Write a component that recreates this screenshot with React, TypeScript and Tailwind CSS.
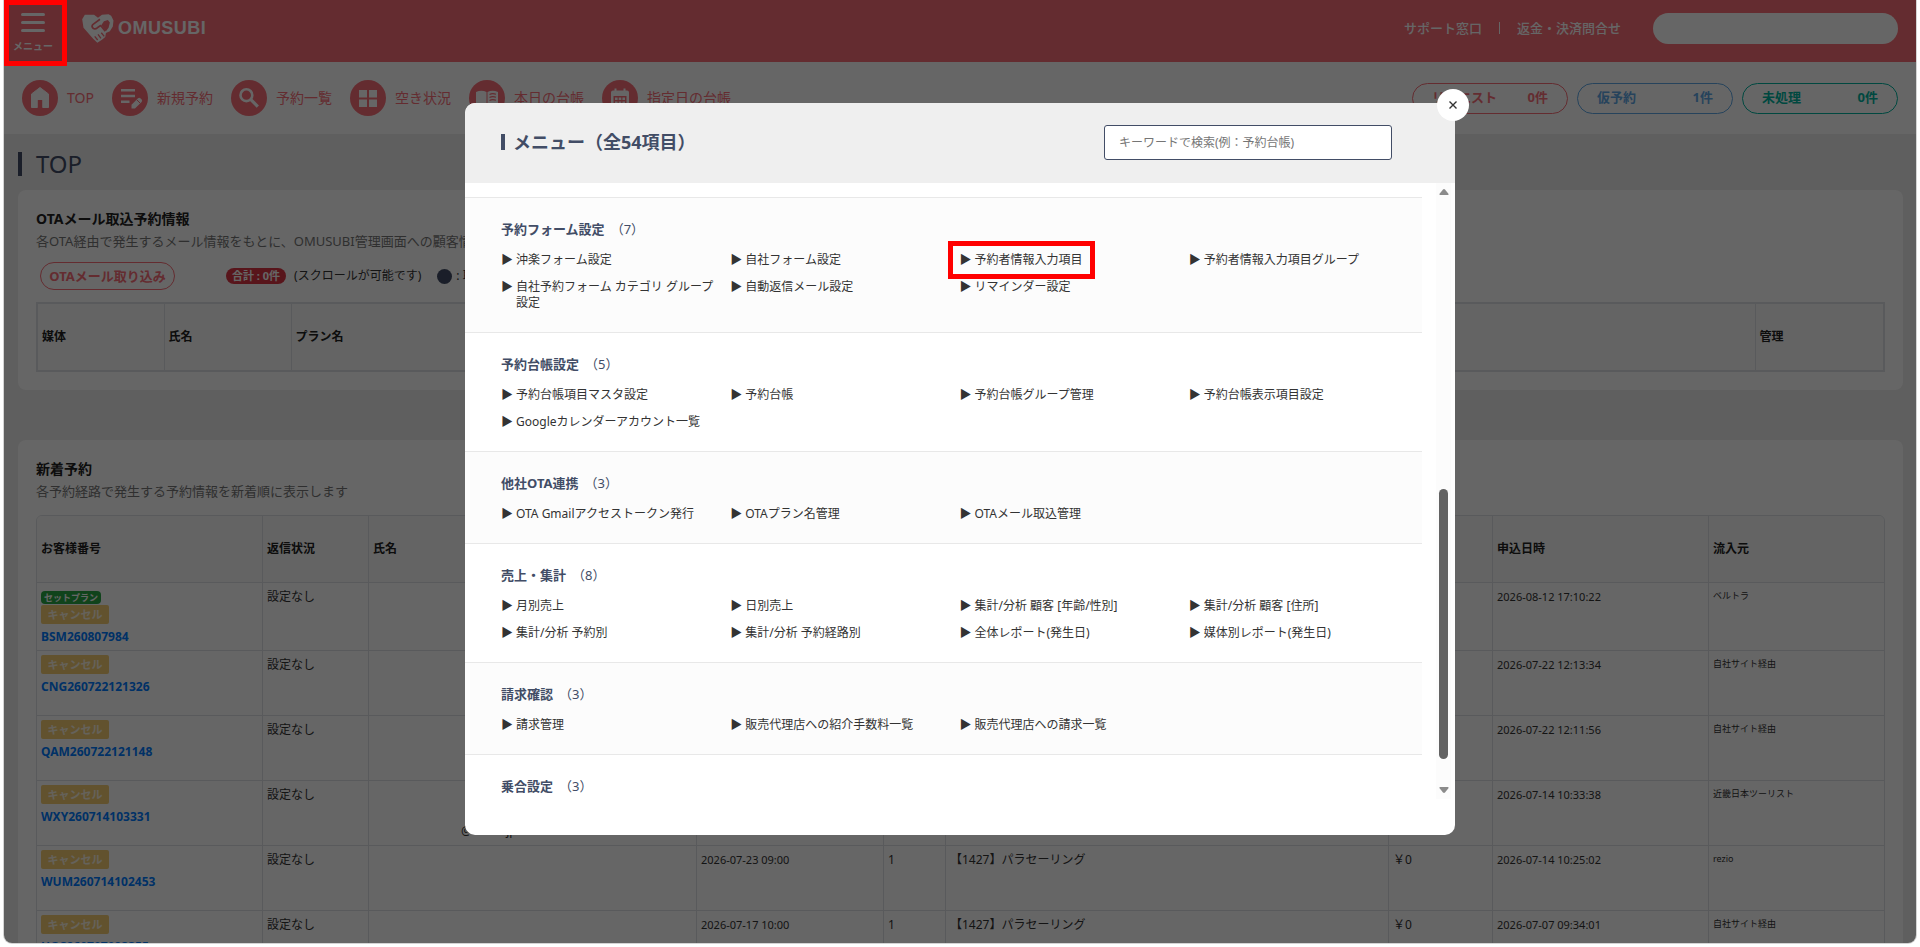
import React, { useState } from 'react';

type MenuSection = {
  title: string;
  count: number;
  items: string[];
};

type Reservation = {
  id: string;
  setPlan?: boolean;
  contact?: string;
  useDate?: string;
  people?: string;
  plan?: string;
  price?: string;
  appliedAt: string;
  source: string;
};

const menuSections: MenuSection[] = [
  {
    title: '予約フォーム設定',
    count: 7,
    items: [
      '沖楽フォーム設定',
      '自社フォーム設定',
      '予約者情報入力項目',
      '予約者情報入力項目グループ',
      '自社予約フォーム カテゴリ グループ設定',
      '自動返信メール設定',
      'リマインダー設定',
    ],
  },
  {
    title: '予約台帳設定',
    count: 5,
    items: [
      '予約台帳項目マスタ設定',
      '予約台帳',
      '予約台帳グループ管理',
      '予約台帳表示項目設定',
      'Googleカレンダーアカウント一覧',
    ],
  },
  {
    title: '他社OTA連携',
    count: 3,
    items: ['OTA Gmailアクセストークン発行', 'OTAプラン名管理', 'OTAメール取込管理'],
  },
  {
    title: '売上・集計',
    count: 8,
    items: [
      '月別売上',
      '日別売上',
      '集計/分析 顧客 [年齢/性別]',
      '集計/分析 顧客 [住所]',
      '集計/分析 予約別',
      '集計/分析 予約経路別',
      '全体レポート(発生日)',
      '媒体別レポート(発生日)',
    ],
  },
  {
    title: '請求確認',
    count: 3,
    items: ['請求管理', '販売代理店への紹介手数料一覧', '販売代理店への請求一覧'],
  },
  { title: '乗合設定', count: 3, items: [] },
];

const reservations: Reservation[] = [
  { id: 'BSM260807984', setPlan: true, appliedAt: '2026-08-12 17:10:22', source: 'ベルトラ' },
  { id: 'CNG260722121326', appliedAt: '2026-07-22 12:13:34', source: '自社サイト経由' },
  { id: 'QAM260722121148', appliedAt: '2026-07-22 12:11:56', source: '自社サイト経由' },
  { id: 'WXY260714103331', contact: '@ sales.jp', appliedAt: '2026-07-14 10:33:38', source: '近畿日本ツーリスト' },
  { id: 'WUM260714102453', useDate: '2026-07-23 09:00', people: '1', plan: '【1427】パラセーリング', price: '￥0', appliedAt: '2026-07-14 10:25:02', source: 'rezio' },
  { id: 'UGC260707093355', useDate: '2026-07-17 10:00', people: '1', plan: '【1427】パラセーリング', price: '￥0', appliedAt: '2026-07-07 09:34:01', source: '自社サイト経由' },
];

const HomeIcon = () => (
  <svg viewBox="0 0 36 36" className="size-9" fill="#fff">
    <path d="M18 7.5 L26.5 14 V27.5 H20.5 V20 H15.5 V27.5 H9.5 V14 Z" stroke="#fff" strokeWidth="1" strokeLinejoin="round" />
    <rect x="15.8" y="20" width="4.4" height="8.2" fill="#fa6e78" />
  </svg>
);

const EditListIcon = () => (
  <svg viewBox="0 0 36 36" className="size-9" fill="none">
    <path d="M9 10.3 H23 M9 16 H23 M9 21.7 H17.5" stroke="#fff" strokeWidth="2.4" />
    <path d="M19.5 28.5 V24.8 L26 18.3 Q27.2 17.2 28.4 18.3 L29.6 19.5 Q30.7 20.7 29.6 21.9 L23 28.5 Z" fill="#fff" />
    <path d="M24.8 19.8 L28.2 23.2" stroke="#fa6e78" strokeWidth="1" />
  </svg>
);

const SearchIcon = () => (
  <svg viewBox="0 0 36 36" className="size-9" fill="none" stroke="#fff">
    <circle cx="15.4" cy="15.2" r="5.9" strokeWidth="2.6" />
    <path d="M19.6 19.4 L26.8 26.6" strokeWidth="3.2" />
  </svg>
);

const GridIcon = () => (
  <svg viewBox="0 0 36 36" className="size-9" fill="#fff">
    <rect x="9" y="10" width="8" height="7.5" />
    <rect x="19" y="10" width="8" height="7.5" />
    <rect x="9" y="19.5" width="8" height="7.5" />
    <rect x="19" y="19.5" width="8" height="7.5" />
  </svg>
);

const BookIcon = () => (
  <svg viewBox="0 0 36 36" className="size-9">
    <path d="M7 12 Q12.5 9.5 17.5 12 V26 Q12.5 23.5 7 26 Z" fill="#fff" />
    <path d="M18.5 12 Q23.5 9.5 29 12 V26 Q23.5 23.5 18.5 26 Z" fill="#fff" />
    <path d="M20.5 14.5 Q23.5 13 27 14.3 M20.5 17.5 Q23.5 16 27 17.3 M20.5 20.5 Q23.5 19 27 20.3" fill="none" stroke="#fa6e78" strokeWidth="1.2" />
  </svg>
);

const CalendarIcon = () => (
  <svg viewBox="0 0 36 36" className="size-9">
    <path d="M11 10.5 H12.5 V8.5 H14.5 V10.5 H21.5 V8.5 H23.5 V10.5 H25 Q27 10.5 27 12.5 V26 Q27 28 25 28 H11 Q9 28 9 26 V12.5 Q9 10.5 11 10.5 Z" fill="#fff" />
    <path d="M11.5 16 H24.5 V25.5 H11.5 Z" fill="#fa6e78" />
    <path d="M13 17.5 h2.6 v2.6 h-2.6 Z M16.7 17.5 h2.6 v2.6 h-2.6 Z M20.4 17.5 h2.6 v2.6 h-2.6 Z M13 21.4 h2.6 v2.6 h-2.6 Z M16.7 21.4 h2.6 v2.6 h-2.6 Z M20.4 21.4 h2.6 v2.6 h-2.6 Z" fill="#fff" />
  </svg>
);

// Two joined hands forming a heart
const LogoMark = () => (
  <svg viewBox="0 0 96 88" className="h-[29px] w-8" fill="none">
    <path d="M8 2 L36 2 L48 11 L60 2 L80 1 L88 5 L95 20 L93 38 L84 52 L72 58 L70 70 L60 78 L46 87 L34 76 L18 58 L4 42 L0 16 Z" fill="#fff" />
    <path d="M54 16 L32 32 Q27 39 34 44 Q40 47 47 41 L56 35 L70 52" stroke="#fa6e78" strokeWidth="5" strokeLinejoin="round" />
    <path d="M58 34 L66 22 L78 18 L84 26 L80 42 L72 52 Z" fill="#fa6e78" />
    <path d="M58 57 L67 68 M48 62 L57 74 M38 68 L47 79" stroke="#fa6e78" strokeWidth="4" />
  </svg>
);

const navItems = [
  { label: 'TOP', icon: <HomeIcon /> },
  { label: '新規予約', icon: <EditListIcon /> },
  { label: '予約一覧', icon: <SearchIcon /> },
  { label: '空き状況', icon: <GridIcon /> },
  { label: '本日の台帳', icon: <BookIcon /> },
  { label: '指定日の台帳', icon: <CalendarIcon /> },
];

const statusPills = [
  { label: 'リクエスト', count: '0件', color: 'border-[#fa6e78] text-[#fa6e78]' },
  { label: '仮予約', count: '1件', color: 'border-[#5fa8e6] text-[#5fa8e6]' },
  { label: '未処理', count: '0件', color: 'border-[#00b5a0] text-[#00b5a0]' },
];

const App: React.FC = () => {
  const [keyword, setKeyword] = useState('');

  const thClass = 'border-r border-b border-[#dee2e6] px-1 text-left font-bold last:border-r-0';
  const tdClass = 'border-r border-b border-[#dee2e6] px-1 pt-[5px] last:border-r-0';

  return (
    <div className="h-screen bg-white px-1 pb-1 font-['Noto_Sans','Noto_Sans_CJK_JP',sans-serif] text-[#333]">
      <div className="relative h-full overflow-hidden rounded-b-lg bg-[#eee] shadow-[0_0_0_1px_#d4d4d4]">
        <header className="flex h-[62px] items-center bg-[#fa6e78] pr-[18px] pb-1.5 text-white">
          <button type="button" className="flex w-[58px] flex-col items-center gap-2 pt-2">
            <span className="flex flex-col gap-[5px]">
              <span className="h-[3px] w-6 rounded-full bg-white" />
              <span className="h-[3px] w-6 rounded-full bg-white" />
              <span className="h-[3px] w-6 rounded-full bg-white" />
            </span>
            <span className="text-[10px] leading-3 font-bold">メニュー</span>
            <span className="absolute top-0 left-0 z-50 h-[66px] w-[63px] border-5 border-[#f00]" />
          </button>
          <a href="#" className="ml-5 flex items-center gap-1">
            <LogoMark />
            <span className="font-['Liberation_Sans',sans-serif] text-lg leading-6 font-bold tracking-wide">OMUSUBI</span>
          </a>
          <div className="ml-auto flex items-center text-[13px] leading-5 font-medium">
            <a href="#">サポート窓口</a>
            <span className="mx-[17px] h-3 w-px bg-white" />
            <a href="#">返金・決済問合せ</a>
            <input aria-label="アカウント" className="ml-8 h-[31px] w-[245px] rounded-full bg-white px-4" />
          </div>
        </header>

        <nav className="flex h-[72px] items-center justify-between bg-white px-[18px]">
          <ul className="flex items-center gap-[18px] text-sm text-[#fa6e78]">
            {navItems.map((item) => (
              <li key={item.label}>
                <a href="#" className="flex items-center gap-[9px]">
                  <span className="rounded-full bg-[#fa6e78]">{item.icon}</span>
                  {item.label}
                </a>
              </li>
            ))}
          </ul>
          <div className="flex gap-[9px]">
            {statusPills.map((pill) => (
              <button
                key={pill.label}
                type="button"
                className={`flex h-[31px] w-[156px] items-center justify-between rounded-full border px-[19px] text-[13px] font-bold ${pill.color}`}
              >
                <span>{pill.label}</span>
                <span>{pill.count}</span>
              </button>
            ))}
          </div>
        </nav>

        <main className="pt-[18px] pr-[13px] pl-3.5">
          <h1 className="flex items-center gap-3.5 text-2xl leading-6 text-[#424d66]">
            <span className="h-6 w-1 bg-[#424d66]" />
            TOP
          </h1>

          <section className="mt-3.5 rounded-lg bg-white px-[18px] pt-[19px] pb-[18px]">
            <h2 className="text-sm leading-5 font-bold text-[#222]">OTAメール取込予約情報</h2>
            <p className="mt-0.5 truncate text-[13px] leading-5 text-[#777]">
              各OTA経由で発生するメール情報をもとに、OMUSUBI管理画面への顧客情報の取り込みを行います
            </p>
            <div className="mt-[11px] flex items-center pl-1 text-xs">
              <button type="button" className="h-7 w-[135px] rounded-full border border-[#fa6e78] text-[13px] leading-5 font-bold text-[#fa6e78]">
                OTAメール取り込み
              </button>
              <span className="ml-[51px] rounded-full bg-[#dc3545] px-1.5 text-[11px] leading-4 font-bold text-white">合計 : 0件</span>
              <span className="ml-2">(スクロールが可能です)</span>
              <span className="ml-4 size-[15px] rounded-full bg-[#424d66]" />
              <span className="ml-1">: 取込済</span>
            </div>
            <table className="mt-3 w-full table-fixed border-collapse border-2 border-[#dee2e6] bg-[#fafafa] text-xs">
              <thead>
                <tr className="h-[68px] text-left text-[#222]">
                  <th className="w-[127px] border border-[#dee2e6] px-1">媒体</th>
                  <th className="w-[127px] border border-[#dee2e6] px-1">氏名</th>
                  <th className="border border-[#dee2e6] px-1">プラン名</th>
                  <th className="w-[129px] border border-[#dee2e6] px-1">管理</th>
                </tr>
              </thead>
            </table>
          </section>

          <section className="mt-[50px] rounded-lg bg-white px-[18px] pt-[19px] pb-[18px]">
            <h2 className="text-sm leading-5 font-bold text-[#222]">新着予約</h2>
            <p className="mt-0.5 text-[13px] leading-5 text-[#777]">各予約経路で発生する予約情報を新着順に表示します</p>
            <div className="mt-3.5 overflow-hidden rounded-t-md border border-[#dee2e6]">
              <table className="w-full table-fixed border-separate border-spacing-0 text-xs">
                <thead className="bg-[#fafafa] text-[#222]">
                  <tr className="h-[67px]">
                    <th className={`${thClass} w-[226px]`}>お客様番号</th>
                    <th className={`${thClass} w-[106px]`}>返信状況</th>
                    <th className={thClass}>氏名</th>
                    <th className={`${thClass} w-[187px]`} />
                    <th className={`${thClass} w-[62px]`} />
                    <th className={`${thClass} w-[443px]`} />
                    <th className={`${thClass} w-[104px]`} />
                    <th className={`${thClass} w-[216px]`}>申込日時</th>
                    <th className={`${thClass} w-[175px]`}>流入元</th>
                  </tr>
                </thead>
                <tbody>
                  {reservations.map((row) => (
                    <tr key={row.id} className="h-[65px] align-top leading-[18px]">
                      <td className="border-r border-b border-[#dee2e6] px-1 pt-1 pb-1">
                        {row.setPlan && (
                          <span className="mt-1 mb-px block w-fit rounded-sm bg-[#28a745] px-[3px] text-[9px] leading-[13px] font-bold text-white">
                            セットプラン
                          </span>
                        )}
                        <span className="block h-[19px] w-[68px] rounded-xs bg-[#f5cd73] text-center text-[11px] leading-[19px] font-bold text-white/80">
                          キャンセル
                        </span>
                        <a href="#" className="mt-1 block font-bold text-[#007bff]">{row.id}</a>
                      </td>
                      <td className={tdClass}>設定なし</td>
                      <td className={tdClass}>
                        {row.contact && <span className="block pt-9 pl-[88px]">{row.contact}</span>}
                      </td>
                      <td className={`${tdClass} text-[11px]`}>{row.useDate}</td>
                      <td className={tdClass}>{row.people}</td>
                      <td className={tdClass}>{row.plan}</td>
                      <td className={tdClass}>{row.price}</td>
                      <td className={`${tdClass} text-[11px]`}>{row.appliedAt}</td>
                      <td className={`${tdClass} text-[9px] leading-4`}>{row.source}</td>
                    </tr>
                  ))}
                </tbody>
              </table>
            </div>
          </section>
        </main>

        <div className="absolute inset-0 z-40 bg-black/60" />

        <div className="absolute inset-x-0 top-[103px] z-50 mx-auto w-[990px] rounded-[10px] bg-white" role="dialog" aria-label="メニュー">
          <button
            type="button"
            aria-label="閉じる"
            className="absolute -top-3.5 -right-3.5 flex size-8 items-center justify-center rounded-full bg-white"
          >
            <svg viewBox="0 0 8 8" className="size-2" stroke="#333" strokeWidth="1.4">
              <path d="M0.5 0.5 L7.5 7.5 M7.5 0.5 L0.5 7.5" />
            </svg>
          </button>

          <div className="flex h-20 items-center justify-between rounded-t-[10px] bg-[#efefef] pr-[63px] pb-0.5 pl-9">
            <h2 className="flex items-center gap-2 text-lg font-bold text-[#424d66]">
              <span className="h-4 w-1 bg-[#424d66]" />
              メニュー（全54項目）
            </h2>
            <input
              type="text"
              aria-label="キーワードで検索"
              placeholder="キーワードで検索(例：予約台帳)"
              value={keyword}
              onChange={(e) => setKeyword(e.target.value)}
              className="h-[35px] w-72 rounded-[3px] border border-[#424d66] bg-white px-3.5 text-xs outline-none placeholder:text-[#757575]"
            />
          </div>

          <div className="flex h-[652px] pr-1 pb-9">
            <div className="mr-3.5 flex-1 overflow-hidden pt-3.5">
              {menuSections.map((section) => (
                <section key={section.title} className="border-t border-[#e8e8e8] pt-[23px] pr-1 pb-[21px] pl-9 odd:bg-[#fcfcfc]">
                  <h3 className="flex gap-1.5 text-[13px] leading-4 font-bold text-[#424d66]">
                    {section.title}
                    <span className="font-normal">（{section.count}）</span>
                  </h3>
                  <ul className="mt-[15px] grid grid-cols-4 gap-y-[11px] text-xs leading-4">
                    {section.items.map((item) => (
                      <li key={item} className="pr-3">
                        <a href="#" className="relative flex w-fit gap-[3px]">
                          <span className="w-3 shrink-0">▶</span>
                          <span>{item}</span>
                          {item === '予約者情報入力項目' && (
                            <span className="absolute -inset-x-3 -inset-y-[11px] border-5 border-[#f00]" />
                          )}
                        </a>
                      </li>
                    ))}
                  </ul>
                </section>
              ))}
            </div>

            <div className="flex w-[15px] flex-col items-center bg-[#fcfcfc] py-1.5">
              <svg viewBox="0 0 10 6" className="h-1.5 w-2.5" fill="#8b8b8b">
                <path d="M4 0.5 Q5 -0.3 6 0.5 L9.6 5 Q9.6 6 9 6 H1 Q0.4 6 0.4 5 Z" />
              </svg>
              <div className="mt-[294px] h-[270px] w-[9px] rounded-full bg-[#636363]" />
              <svg viewBox="0 0 10 6" className="mt-auto h-1.5 w-2.5" fill="#8b8b8b">
                <path d="M4 5.5 Q5 6.3 6 5.5 L9.6 1 Q9.6 0 9 0 H1 Q0.4 0 0.4 1 Z" />
              </svg>
            </div>
          </div>
        </div>
      </div>
    </div>
  );
};

export default App;
